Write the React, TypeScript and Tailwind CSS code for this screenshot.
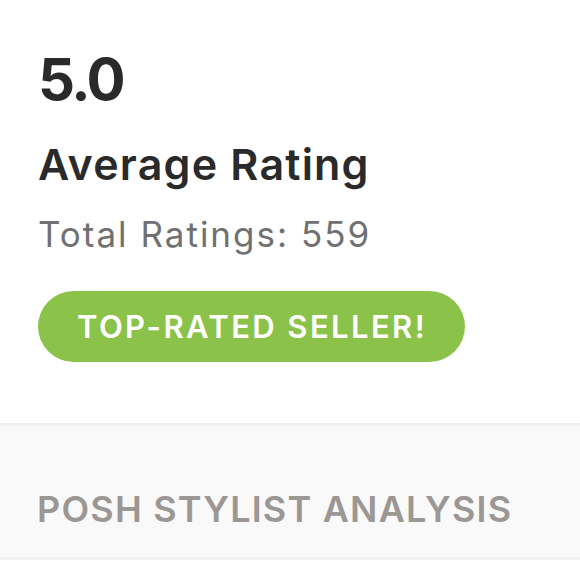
export default function App() {
  return (
    <div className="w-[580px] h-[580px] bg-white overflow-hidden font-['Inter',sans-serif]">
      <div className="pl-[38px] pt-[50px]">
        <div className="text-[58px] leading-[58px] font-bold text-[#2a2a2a] tracking-[-2.5px]">5.0</div>
        <div className="mt-[35px] text-[43px] leading-[43px] font-semibold text-[#2a2a2a] tracking-[1.2px]">Average Rating</div>
        <div className="mt-[31px] text-[35px] leading-[35px] text-[#707070] tracking-[2px]">Total Ratings: 559</div>
        <div className="mt-[39px] flex items-center h-[71px] w-[427px] pl-[39px] rounded-full bg-[#8bc34a] text-white text-[31px] leading-[31px] font-semibold tracking-[2.4px]">
          TOP-RATED SELLER!
        </div>
      </div>
      <div className="mt-[61px] border-y-[3px] border-[#f2f1f1] bg-[#faf9fa] h-[137px] pl-[37px] pt-[65px]">
        <div className="text-[36px] leading-[36px] font-semibold text-[#9b9794] tracking-[1.2px]">POSH STYLIST ANALYSIS</div>
      </div>
    </div>
  );
}
